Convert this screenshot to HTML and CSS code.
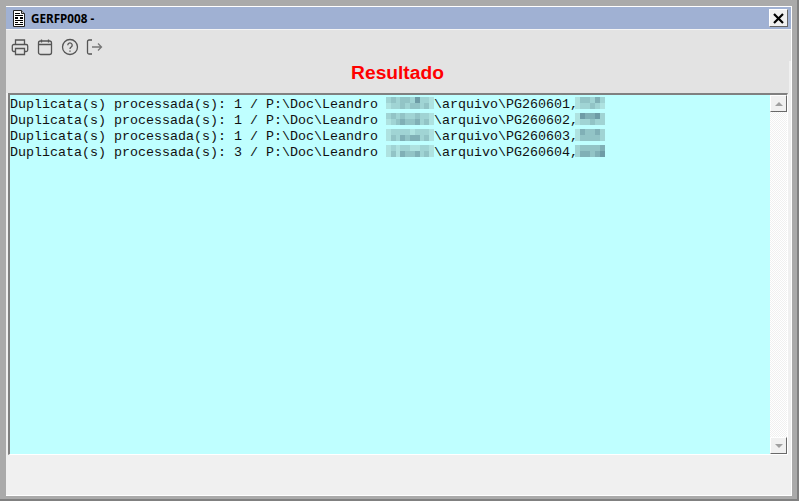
FILE: index.html
```html
<!DOCTYPE html>
<html lang="pt">
<head>
<meta charset="utf-8">
<title>GERFP008</title>
<link rel="stylesheet" href="styles.css">
</head>
<body>
<div class="window">
  <header class="titlebar">
    <svg class="doc-icon" width="12" height="17" viewBox="0 0 12 17">
      <path d="M.5.5h8l3 3v13h-11z" fill="#fff" stroke="#222"/>
      <path d="M8.500.5v3h3" fill="#bbb" stroke="#222"/>
      <path d="M2 3.500h5M2 5.500h8M2 7.500h3M7 7.500h3M2 8.500h3M7 8.500h3M2 10.500h8M2 12.500h3M7 12.500h3M2 14.500h8" stroke="#000" fill="none"/>
    </svg>
    <span class="title">GERFP008 -</span>
    <button class="close" aria-label="Fechar">
      <svg width="11" height="11" viewBox="0 0 11 11"><path d="M1 1l9 9M10 1l-9 9" stroke="#000" stroke-width="2.200" fill="none"/></svg>
    </button>
  </header>
  <div class="toolbar">
    <svg class="tool" width="18" height="18" viewBox="0 0 18 18" fill="none" stroke="#555" stroke-width="1.300">
      <path d="M4.500 6.500V2h9v4.500"/>
      <path d="M4.500 13.500H2.800a1.500 1.500 0 0 1-1.500-1.500V8a1.500 1.500 0 0 1 1.500-1.500h12.400A1.500 1.500 0 0 1 16.700 8v4a1.500 1.500 0 0 1-1.500 1.500h-1.700"/>
      <path d="M4.500 10.500h9v6h-9z"/>
    </svg>
    <svg class="tool" width="18" height="18" viewBox="0 0 18 18" fill="none" stroke="#555" stroke-width="1.300">
      <rect x="2.500" y="3" width="13" height="13.500" rx="2"/>
      <path d="M2.500 6.500h13M5.500 1.500v3M12.500 1.500v3"/>
    </svg>
    <svg class="tool" width="18" height="18" viewBox="0 0 18 18" fill="none" stroke="#555" stroke-width="1.300">
      <circle cx="9" cy="9" r="7.500"/>
      <path d="M6.800 7.200a2.200 2.200 0 1 1 3.400 1.800c-.8.500-1.200 1-1.200 2"/>
      <path d="M9 12.500v1.300"/>
    </svg>
    <svg class="tool" width="18" height="18" viewBox="0 0 18 18" fill="none" stroke="#555" stroke-width="1.300">
      <path d="M6 2H3a1.500 1.500 0 0 0-1.500 1.500v11A1.500 1.500 0 0 0 3 16h3"/>
      <path d="M6 9h9.500M12 5.500L15.500 9 12 12.500" stroke="#777"/>
    </svg>
  </div>
  <h1 class="heading">Resultado</h1>
  <div class="memo">
    <div class="memo-text">
      <div class="line">Duplicata(s) processada(s): 1 / P:\Doc\Leandro <span class="smear name-1"></span>\arquivo\PG260601,<span class="smear ext ext-1"></span></div>
      <div class="line">Duplicata(s) processada(s): 1 / P:\Doc\Leandro <span class="smear name-2"></span>\arquivo\PG260602,<span class="smear ext ext-2"></span></div>
      <div class="line">Duplicata(s) processada(s): 1 / P:\Doc\Leandro <span class="smear name-3"></span>\arquivo\PG260603,<span class="smear ext ext-3"></span></div>
      <div class="line">Duplicata(s) processada(s): 3 / P:\Doc\Leandro <span class="smear name-4"></span>\arquivo\PG260604,<span class="smear ext ext-4"></span></div>
    </div>
    <div class="scrollbar">
      <button class="arrow" aria-label="Acima"><span class="tri tri-up"></span></button>
      <div class="track"></div>
      <button class="arrow" aria-label="Abaixo"><span class="tri tri-down"></span></button>
    </div>
  </div>
  <div class="statusbar"></div>
</div>
</body>
</html>
```
FILE: styles.css
```css
* { box-sizing: border-box; }
html, body { margin: 0; height: 100%; }
body {
  background: #aaaaaa;
  overflow: hidden;
  border-right: 2px solid #808080;
  border-bottom: 2px solid #808080;
}
.window {
  height: 490px;
  margin: 6px 5px 0 6px;
  display: flex;
  flex-direction: column;
  background: #f0f0f0;
  border-top: 1px solid #fff;
  border-right: 1px solid #fff;
  border-bottom: 1px solid #fff;
}
.titlebar {
  flex: 0 0 23px;
  display: flex;
  align-items: center;
  padding: 0 3px 0 7px;
  background: #a0b1d3;
  border-bottom: 1px solid #f4f4f4;
}
.doc-icon { flex: none; }
.title {
  margin-left: 6px;
  font: bold 11.7px "Noto Sans", "DejaVu Sans", sans-serif;
  color: #000;
  flex: 1;
}
.close {
  width: 19px;
  height: 18px;
  padding: 0;
  display: flex;
  align-items: center;
  justify-content: center;
  background: #f0f0f0;
  border: 1px solid #fff;
  border-right-color: #666;
  border-bottom-color: #666;
}
.toolbar {
  flex: 0 0 31px;
  display: flex;
  align-items: center;
  gap: 7px;
  padding: 2px 0 0 5px;
  background: #e3e3e3;
}
.tool { flex: none; }
.heading {
  margin: 0 2px 0 0;
  flex: 0 0 32px;
  text-align: center;
  font: bold 19.2px/23px "Liberation Sans", Arial, sans-serif;
  color: #ff0000;
  background: #e3e3e3;
}
.memo {
  flex: 0 0 362px;
  margin: 0 3px 0 2px;
  display: flex;
  border-top: 2px solid #808080;
  border-left: 2px solid #808080;
  border-bottom: 1px solid #fff;
  border-right: 1px solid #fff;
  background: #bfffff;
}
.memo-text {
  flex: 1;
  padding: 2px 0 0 0;
  font: 13.33px/16px "Liberation Mono", "Courier New", monospace;
  color: #111;
  overflow: hidden;
}
.line { white-space: pre; }
.smear {
  --a: #aee2e0;
  --b: #a0d4d4;
  --c: #92c4c6;
  --d: #80b0b6;
  --e: #6e9ca6;
  display: inline-block;
  width: 48px;
  height: 12px;
  vertical-align: -1px;
  background-repeat: no-repeat;
  background-size: 100% 50%;
  background-position: top, bottom;
}
.ext { width: 30px; margin-left: -3px; }
.name-1 { background-image:
  linear-gradient(90deg, var(--b) 0 10%, var(--c) 0 20%, var(--b) 0 30%, var(--c) 0 40%, var(--c) 0 50%, var(--b) 0 60%, var(--e) 0 70%, var(--b) 0 80%, var(--b) 0 90%, var(--a) 0),
  linear-gradient(90deg, var(--a) 0 10%, var(--b) 0 20%, var(--b) 0 30%, var(--c) 0 40%, var(--b) 0 50%, var(--c) 0 60%, var(--c) 0 70%, var(--b) 0 80%, var(--c) 0 90%, var(--a) 0); }
.name-2 { background-image:
  linear-gradient(90deg, var(--b) 0 10%, var(--c) 0 20%, var(--b) 0 30%, var(--c) 0 40%, var(--b) 0 50%, var(--b) 0 60%, var(--c) 0 70%, var(--b) 0 80%, var(--b) 0 90%, var(--a) 0),
  linear-gradient(90deg, var(--a) 0 10%, var(--b) 0 20%, var(--c) 0 30%, var(--d) 0 40%, var(--c) 0 50%, var(--c) 0 60%, var(--d) 0 70%, var(--b) 0 80%, var(--c) 0 90%, var(--a) 0); }
.name-3 { background-image:
  linear-gradient(90deg, var(--a) 0 10%, var(--b) 0 20%, var(--b) 0 30%, var(--b) 0 40%, var(--b) 0 50%, var(--a) 0 60%, var(--b) 0 70%, var(--b) 0 80%, var(--b) 0 90%, var(--a) 0),
  linear-gradient(90deg, var(--a) 0 10%, var(--c) 0 20%, var(--b) 0 30%, var(--d) 0 40%, var(--c) 0 50%, var(--d) 0 60%, var(--d) 0 70%, var(--b) 0 80%, var(--c) 0 90%, var(--a) 0); }
.name-4 { background-image:
  linear-gradient(90deg, var(--a) 0 10%, var(--b) 0 20%, var(--a) 0 30%, var(--b) 0 50%, var(--a) 0 70%, var(--b) 0 90%, var(--a) 0),
  linear-gradient(90deg, var(--a) 0 10%, var(--c) 0 20%, var(--a) 0 30%, var(--d) 0 40%, var(--c) 0 60%, var(--d) 0 70%, var(--b) 0 80%, var(--c) 0 90%, var(--a) 0); }
.ext-1 { background-image:
  linear-gradient(90deg, var(--a) 0 16.700%, var(--c) 0 33.300%, var(--c) 0 50%, var(--b) 0 66.700%, var(--d) 0 83.300%, var(--b) 0),
  linear-gradient(90deg, var(--a) 0 16.700%, var(--b) 0 33.300%, var(--b) 0 50%, var(--c) 0 66.700%, var(--b) 0 83.300%, var(--a) 0); }
.ext-2 { background-image:
  linear-gradient(90deg, var(--a) 0 16.700%, var(--e) 0 33.300%, var(--d) 0 50%, var(--d) 0 66.700%, var(--e) 0 83.300%, var(--b) 0),
  linear-gradient(90deg, var(--a) 0 16.700%, var(--b) 0 33.300%, var(--b) 0 50%, var(--c) 0 66.700%, var(--b) 0 83.300%, var(--b) 0); }
.ext-3 { background-image:
  linear-gradient(90deg, var(--a) 0 16.700%, var(--d) 0 33.300%, var(--c) 0 50%, var(--c) 0 66.700%, var(--d) 0 83.300%, var(--b) 0),
  linear-gradient(90deg, var(--a) 0 16.700%, var(--c) 0 33.300%, var(--c) 0 50%, var(--c) 0 66.700%, var(--c) 0 83.300%, var(--b) 0); }
.ext-4 { background-image:
  linear-gradient(90deg, var(--b) 0 16.700%, var(--c) 0 33.300%, var(--c) 0 66.700%, var(--c) 0 83.300%, var(--d) 0),
  linear-gradient(90deg, var(--b) 0 16.700%, var(--d) 0 33.300%, var(--d) 0 50%, var(--c) 0 66.700%, var(--d) 0 83.300%, var(--e) 0); }
.scrollbar {
  flex: 0 0 17px;
  display: flex;
  flex-direction: column;
}
.track {
  flex: 1;
  background: repeating-conic-gradient(#fff 0 25%, #f0f0f0 0 50%) 0 0 / 2px 2px;
}
.arrow {
  flex: 0 0 17px;
  padding: 0;
  display: flex;
  align-items: center;
  justify-content: center;
  background: #f0f0f0;
  border: 1px solid #fff;
  border-right-color: #696969;
  border-bottom-color: #696969;
}
.tri { width: 0; height: 0; border-left: 4px solid transparent; border-right: 4px solid transparent; }
.tri-up { border-bottom: 4px solid #a0a0a0; }
.tri-down { border-top: 4px solid #a0a0a0; }
.statusbar {
  flex: 1;
  background: #f0f0f0;
}
```
